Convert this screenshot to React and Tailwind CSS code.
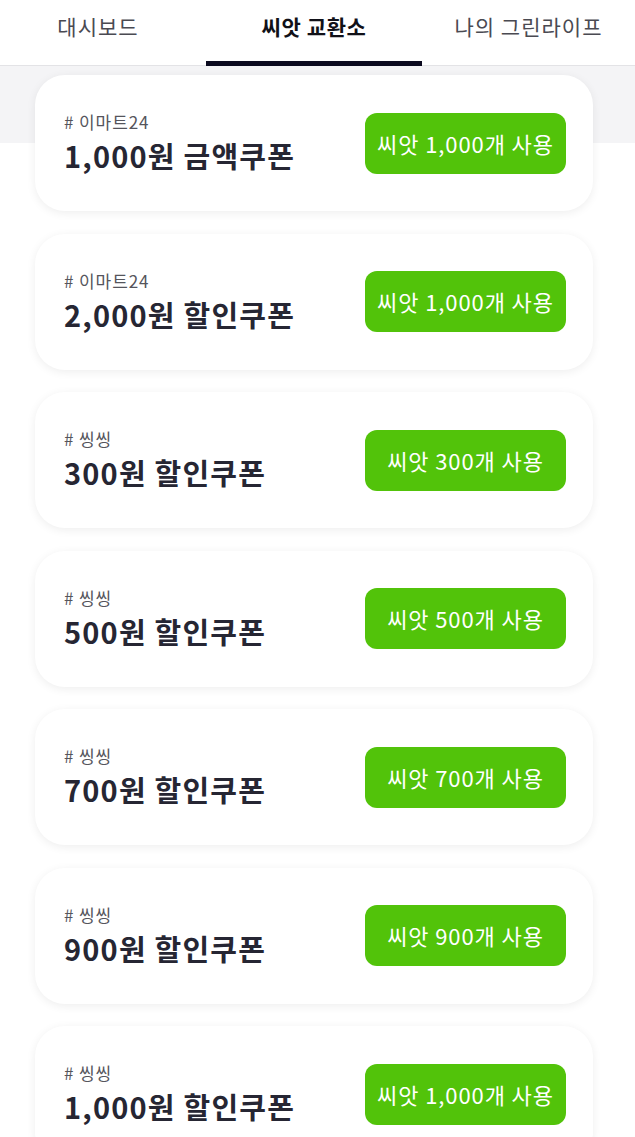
const coupons = [
  { brand: '이마트24', title: '1,000원 금액쿠폰', seeds: '1,000' },
  { brand: '이마트24', title: '2,000원 할인쿠폰', seeds: '1,000' },
  { brand: '씽씽', title: '300원 할인쿠폰', seeds: '300' },
  { brand: '씽씽', title: '500원 할인쿠폰', seeds: '500' },
  { brand: '씽씽', title: '700원 할인쿠폰', seeds: '700' },
  { brand: '씽씽', title: '900원 할인쿠폰', seeds: '900' },
  { brand: '씽씽', title: '1,000원 할인쿠폰', seeds: '1,000' },
]

const tabs = [
  { label: '대시보드', cls: 'pr-[10px]' },
  { label: '씨앗 교환소', cls: '' },
  { label: '나의 그린라이프', cls: '' },
]

export default function App() {
  const active = 1

  return (
    <div
      className="w-[635px] h-[1137px] overflow-hidden bg-white"
      style={{ fontFamily: '"Noto Sans CJK KR", "Noto Sans", sans-serif' }}
    >
      <div className="grid grid-cols-[206px_216px_1fr] h-[66px] border-b border-[#e3e3e6]">
        {tabs.map((t, i) => (
          <div key={t.label} className={`relative flex items-center justify-center pb-[11px] ${t.cls}`}>
            <span
              className={
                i === active
                  ? 'text-[21px] font-bold text-[#111118] tracking-[0.6px]'
                  : 'text-[21px] text-[#4a4a52] tracking-[1px]'
              }
            >
              {t.label}
            </span>
            {i === active && (
              <div className="absolute left-0 right-0 -bottom-px h-[5px] bg-[#0b0a1f]" />
            )}
          </div>
        ))}
      </div>

      <div className="flex flex-col gap-[22.5px] pl-[35px] pr-[42px] pt-[9px] bg-[linear-gradient(#f4f4f6_77px,#ffffff_77px)]">
        {coupons.map((c, i) => (
          <div
            key={i}
            className="h-[136px] shrink-0 rounded-[30px] bg-white shadow-[0_2px_10px_rgba(0,0,0,0.07)] flex items-center justify-between pl-[29px] pr-[27px]"
          >
            <div className="flex flex-col">
              <span className="text-[17px] leading-[20px] mb-[4px] text-[#55555c] tracking-[0.9px]"># {c.brand}</span>
              <span className="text-[29px] leading-[38px] font-bold text-[#262633] tracking-[1.2px]">
                {c.title}
              </span>
            </div>
            <button className="w-[201px] h-[61px] rounded-[12px] bg-[#52c30a] text-white text-[22px] tracking-[0.9px] flex items-center justify-center">
              씨앗 {c.seeds}개 사용
            </button>
          </div>
        ))}
      </div>
    </div>
  )
}
